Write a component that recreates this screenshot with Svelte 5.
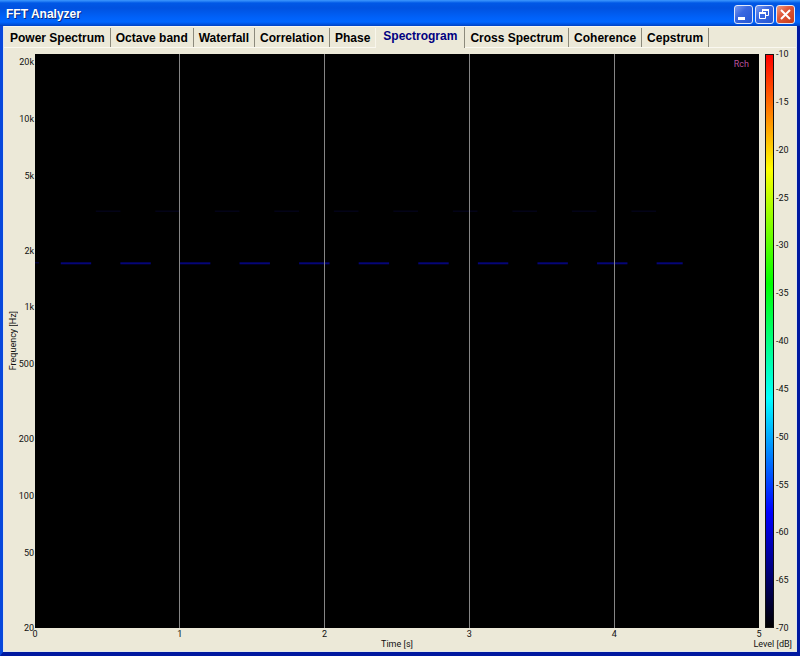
<script lang="ts">
    interface Burst {
        start: number; // seconds
        length: number;
        hz: number;
    }

    const TABS = [
        "Power Spectrum",
        "Octave band",
        "Waterfall",
        "Correlation",
        "Phase",
        "Spectrogram",
        "Cross Spectrum",
        "Coherence",
        "Cepstrum",
    ];

    const MIN_HZ = 20;
    const MAX_HZ = 22050;
    const DURATION = 5;
    const MAX_DB = -10;
    const MIN_DB = -70;

    const FREQ_TICKS = [20, 50, 100, 200, 500, 1000, 2000, 5000, 10000, 20000];
    const TIME_TICKS = [0, 1, 2, 3, 4, 5];
    const LEVEL_TICKS = [-10, -15, -20, -25, -30, -35, -40, -45, -50, -55, -60, -65, -70];

    const TONE_HZ = 1735;
    const HARMONIC_HZ = 3260;

    // Main tone repeats every 0.41 s, the last burst is cut short
    const tone: Burst[] = Array.from({length: 11}, (_, i) => ({
        start: 0.178 + i * 0.4115,
        length: i === 10 ? 0.18 : 0.21,
        hz: TONE_HZ,
    }));

    const harmonic: Burst[] = Array.from({length: 10}, (_, i) => ({
        start: 0.42 + i * 0.411,
        length: 0.17,
        hz: HARMONIC_HZ,
    }));

    let selected = $state("Spectrogram");

    function freqY(hz: number): string {
        return (100 * (1 - Math.log(hz / MIN_HZ) / Math.log(MAX_HZ / MIN_HZ))).toFixed(2) + "%";
    }

    function timeX(s: number): string {
        return ((s / DURATION) * 100).toFixed(2) + "%";
    }

    function levelY(db: number): string {
        return (((MAX_DB - db) / (MAX_DB - MIN_DB)) * 100).toFixed(2) + "%";
    }

    function formatHz(hz: number): string {
        return hz >= 1000 ? `${hz / 1000}k` : `${hz}`;
    }
</script>

<div class="window">
    <header class="titlebar">
        <h1>FFT Analyzer</h1>
        <div class="controls">
            <button class="control" aria-label="Minimize">
                <svg viewBox="0 0 17 17"><rect x="3" y="11" width="7" height="3" fill="#fff" /></svg>
            </button>
            <button class="control" aria-label="Restore">
                <svg viewBox="0 0 17 17" fill="none" stroke="#fff">
                    <path d="M6.5 6V3.5h6v6H10" />
                    <path d="M6 4h7" stroke-width="2" />
                    <path d="M3.5 7.5h6v5h-6z" />
                    <path d="M3 7h7" stroke-width="2" />
                </svg>
            </button>
            <button class="control close" aria-label="Close">
                <svg viewBox="0 0 17 17" stroke="#fff" stroke-width="2">
                    <path d="M4 4l9 9M13 4l-9 9" />
                </svg>
            </button>
        </div>
    </header>

    <main class="client">
        <div class="tabs" role="tablist">
            {#each TABS as tab (tab)}
                <button
                    class="tab"
                    class:selected={tab === selected}
                    role="tab"
                    aria-selected={tab === selected}
                    onclick={() => (selected = tab)}
                >{tab}</button>
            {/each}
        </div>

        <section class="chart">
            <div class="freq-title">Frequency [Hz]</div>
            <svg class="freq-axis">
                {#each FREQ_TICKS as hz (hz)}
                    <text x="100%" y={freqY(hz)} dx="-1" dy="3" text-anchor="end">{formatHz(hz)}</text>
                {/each}
            </svg>

            <svg class="plot">
                <rect x="0" y={freqY(TONE_HZ)} width="4" height="1" fill="#000050" />
                {#each harmonic as b (b.start)}
                    <rect x={timeX(b.start)} y={freqY(b.hz)} width={timeX(b.length)} height="1" fill="#050524" />
                {/each}
                {#each tone as b (b.start)}
                    <rect class="tone" x={timeX(b.start)} y={freqY(b.hz)} width={timeX(b.length)} height="2" />
                {/each}
                {#each TIME_TICKS.slice(1, -1) as s (s)}
                    <line x1={timeX(s)} x2={timeX(s)} y1="0" y2="100%" />
                {/each}
                <text x="100%" y="13" dx="-10" text-anchor="end">Rch</text>
            </svg>

            <div class="colorbar"></div>
            <svg class="level-axis">
                {#each LEVEL_TICKS as db (db)}
                    <text x="2" y={levelY(db)} dy="3">{db}</text>
                {/each}
            </svg>

            <svg class="time-axis">
                {#each TIME_TICKS as s (s)}
                    <text x={timeX(s)} y="9" text-anchor="middle">{s}</text>
                {/each}
            </svg>
            <div class="time-title">Time [s]</div>
            <div class="level-title">Level [dB]</div>
        </section>
    </main>
</div>

<style>
:global(body) {
    margin: 0;
    font-family: "Liberation Sans", Arial, sans-serif;
}

.window {
    display: flex;
    flex-direction: column;
    min-height: 100vh;
    box-sizing: border-box;
    border-style: solid;
    border-width: 0 3px 4px;
    border-color: transparent #0019a0 #0019a0 #0848dc;
    background: #ece9d8;
}

.titlebar {
    display: flex;
    align-items: center;
    justify-content: space-between;
    height: 26px;
    margin: 0 -3px;
    padding: 2px 5px 0 6px;
    box-sizing: border-box;
    background: linear-gradient(#3c96fc 0, #2a86f8 1px, #0058e6 3px, #0052e0 8px, #0062fa 18px, #0066ff 22px, #004cd4 25px, #0040c0 26px);
}

h1 {
    margin: 0;
    color: #fff;
    font-size: 12px;
    line-height: 16px;
    text-shadow: 1px 1px #0a2a80;
}

.controls {
    display: flex;
    gap: 2px;
}

.control {
    width: 19px;
    height: 19px;
    padding: 0;
    border: 1px solid #e0e8fa;
    border-radius: 3px;
    background: linear-gradient(135deg, #7c9cf0, #3a68e0 40%, #2456d4);
}

.control.close {
    background: linear-gradient(135deg, #f09a80, #e0583a 40%, #c83c18);
}

.control svg {
    display: block;
    width: 17px;
    height: 17px;
}

.client {
    flex: 1;
    display: flex;
    flex-direction: column;
    border: 1px solid #dfe6ea;
    border-width: 0 1px 1px;
    box-shadow: inset 0 1px #f8f6ee;
}

.tabs {
    display: flex;
    align-items: flex-end;
    height: 22px;
    padding-left: 1px;
    border-bottom: 1px solid #faf8f0;
    box-sizing: border-box;
}

.tab {
    height: 19px;
    padding: 0 5px;
    border: 0;
    border-right: 1px solid #8c8a7c;
    background: #ece9d8;
    color: #000;
    font: bold 12px/18px "Liberation Sans", Arial, sans-serif;
    white-space: nowrap;
}

.tab:has(+ .selected) {
    border-right-color: #f8f6ec;
}

.tab.selected {
    height: 21px;
    margin-bottom: -1px;
    padding: 0 7px 3px;
    color: #000080;
}

.chart {
    flex: 1;
    display: grid;
    grid-template-columns: 14px 17px 1fr 15px 22px;
    grid-template-rows: 1fr 11px 12px;
    padding-top: 6px;
    color: #111;
    font: 9px/10px Roboto, "Liberation Sans", sans-serif;
}

.chart svg {
    display: block;
    width: 100%;
    height: 100%;
    overflow: visible;
}

.chart text {
    fill: #111;
}

.freq-title {
    align-self: center;
    justify-self: end;
    writing-mode: vertical-rl;
    transform: rotate(180deg);
    white-space: nowrap;
}

.plot {
    background: #000;
}

.plot line {
    stroke: #858585;
    shape-rendering: crispEdges;
}

.plot .tone {
    fill: #050578;
}

.chart .plot text {
    fill: #b8509c;
}

.colorbar {
    margin-left: 6px;
    box-sizing: border-box;
    border: 1px solid #111;
    background: linear-gradient(#f00, #ff0 20%, #0f0 40%, #0ff 60%, #00f 80%, #000);
}

.time-axis {
    grid-area: 2 / 3;
}

.time-title {
    grid-area: 3 / 3;
    justify-self: center;
}

.level-title {
    grid-area: 3 / 3 / 4 / 6;
    justify-self: end;
    margin-right: 4px;
}
</style>
